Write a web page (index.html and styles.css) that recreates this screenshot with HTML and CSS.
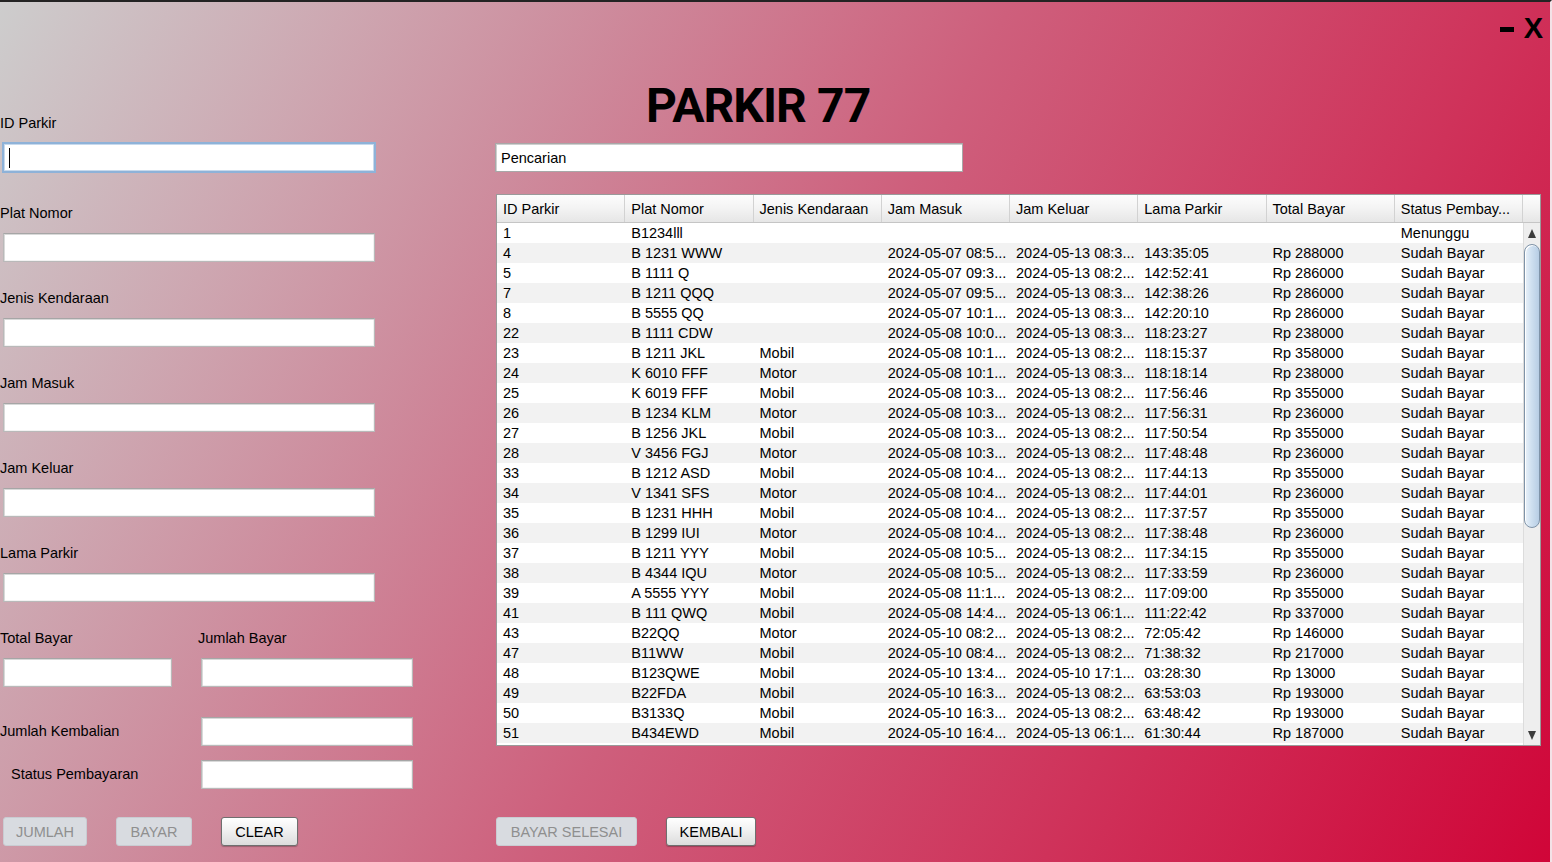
FILE: index.html
```html
<!DOCTYPE html>
<html lang="id">
<head>
<meta charset="utf-8">
<title>PARKIR 77</title>
<link rel="stylesheet" href="styles.css">
</head>
<body>
<div class="window">
  <div class="controls"><span class="dash"></span><span class="close">X</span></div>

  <div class="left">
    <div class="group group-first">
      <div class="label">ID Parkir</div>
      <div class="field field-focus"><span class="caret"></span></div>
    </div>
    <div class="group">
      <div class="label">Plat Nomor</div>
      <div class="field"></div>
    </div>
    <div class="group">
      <div class="label">Jenis Kendaraan</div>
      <div class="field"></div>
    </div>
    <div class="group">
      <div class="label">Jam Masuk</div>
      <div class="field"></div>
    </div>
    <div class="group">
      <div class="label">Jam Keluar</div>
      <div class="field"></div>
    </div>
    <div class="group">
      <div class="label">Lama Parkir</div>
      <div class="field"></div>
    </div>

    <div class="pay-row pay-labels">
      <div class="label pay-col">Total Bayar</div>
      <div class="label">Jumlah Bayar</div>
    </div>
    <div class="pay-row pay-inputs">
      <div class="pay-col"><div class="field field-total"></div></div>
      <div class="field field-side"></div>
    </div>
    <div class="pay-row pay-kembali">
      <div class="label pay-col">Jumlah Kembalian</div>
      <div class="field field-side"></div>
    </div>
    <div class="pay-row pay-status">
      <div class="label pay-col label-status">Status Pembayaran</div>
      <div class="field field-side"></div>
    </div>

    <div class="buttons buttons-left">
      <button class="btn btn-disabled btn-jumlah">JUMLAH</button>
      <button class="btn btn-disabled btn-bayar">BAYAR</button>
      <button class="btn btn-clear">CLEAR</button>
    </div>
  </div>

  <div class="right">
    <div class="title">PARKIR 77</div>
    <div class="field search">Pencarian</div>

    <div class="table">
      <div class="thead">
        <div class="th">ID Parkir</div>
        <div class="th">Plat Nomor</div>
        <div class="th">Jenis Kendaraan</div>
        <div class="th">Jam Masuk</div>
        <div class="th">Jam Keluar</div>
        <div class="th">Lama Parkir</div>
        <div class="th">Total Bayar</div>
        <div class="th">Status Pembay...</div>
        <div class="th th-corner"></div>
      </div>
      <div class="tbody">
        <div class="rows">
          <div class="tr"><div>1</div><div>B1234lll</div><div></div><div></div><div></div><div></div><div></div><div>Menunggu</div></div>
          <div class="tr"><div>4</div><div>B 1231 WWW</div><div></div><div>2024-05-07 08:5...</div><div>2024-05-13 08:3...</div><div>143:35:05</div><div>Rp 288000</div><div>Sudah Bayar</div></div>
          <div class="tr"><div>5</div><div>B 1111 Q</div><div></div><div>2024-05-07 09:3...</div><div>2024-05-13 08:2...</div><div>142:52:41</div><div>Rp 286000</div><div>Sudah Bayar</div></div>
          <div class="tr"><div>7</div><div>B 1211 QQQ</div><div></div><div>2024-05-07 09:5...</div><div>2024-05-13 08:3...</div><div>142:38:26</div><div>Rp 286000</div><div>Sudah Bayar</div></div>
          <div class="tr"><div>8</div><div>B 5555 QQ</div><div></div><div>2024-05-07 10:1...</div><div>2024-05-13 08:3...</div><div>142:20:10</div><div>Rp 286000</div><div>Sudah Bayar</div></div>
          <div class="tr"><div>22</div><div>B 1111 CDW</div><div></div><div>2024-05-08 10:0...</div><div>2024-05-13 08:3...</div><div>118:23:27</div><div>Rp 238000</div><div>Sudah Bayar</div></div>
          <div class="tr"><div>23</div><div>B 1211 JKL</div><div>Mobil</div><div>2024-05-08 10:1...</div><div>2024-05-13 08:2...</div><div>118:15:37</div><div>Rp 358000</div><div>Sudah Bayar</div></div>
          <div class="tr"><div>24</div><div>K 6010 FFF</div><div>Motor</div><div>2024-05-08 10:1...</div><div>2024-05-13 08:3...</div><div>118:18:14</div><div>Rp 238000</div><div>Sudah Bayar</div></div>
          <div class="tr"><div>25</div><div>K 6019 FFF</div><div>Mobil</div><div>2024-05-08 10:3...</div><div>2024-05-13 08:2...</div><div>117:56:46</div><div>Rp 355000</div><div>Sudah Bayar</div></div>
          <div class="tr"><div>26</div><div>B 1234 KLM</div><div>Motor</div><div>2024-05-08 10:3...</div><div>2024-05-13 08:2...</div><div>117:56:31</div><div>Rp 236000</div><div>Sudah Bayar</div></div>
          <div class="tr"><div>27</div><div>B 1256 JKL</div><div>Mobil</div><div>2024-05-08 10:3...</div><div>2024-05-13 08:2...</div><div>117:50:54</div><div>Rp 355000</div><div>Sudah Bayar</div></div>
          <div class="tr"><div>28</div><div>V 3456 FGJ</div><div>Motor</div><div>2024-05-08 10:3...</div><div>2024-05-13 08:2...</div><div>117:48:48</div><div>Rp 236000</div><div>Sudah Bayar</div></div>
          <div class="tr"><div>33</div><div>B 1212 ASD</div><div>Mobil</div><div>2024-05-08 10:4...</div><div>2024-05-13 08:2...</div><div>117:44:13</div><div>Rp 355000</div><div>Sudah Bayar</div></div>
          <div class="tr"><div>34</div><div>V 1341 SFS</div><div>Motor</div><div>2024-05-08 10:4...</div><div>2024-05-13 08:2...</div><div>117:44:01</div><div>Rp 236000</div><div>Sudah Bayar</div></div>
          <div class="tr"><div>35</div><div>B 1231 HHH</div><div>Mobil</div><div>2024-05-08 10:4...</div><div>2024-05-13 08:2...</div><div>117:37:57</div><div>Rp 355000</div><div>Sudah Bayar</div></div>
          <div class="tr"><div>36</div><div>B 1299 IUI</div><div>Motor</div><div>2024-05-08 10:4...</div><div>2024-05-13 08:2...</div><div>117:38:48</div><div>Rp 236000</div><div>Sudah Bayar</div></div>
          <div class="tr"><div>37</div><div>B 1211 YYY</div><div>Mobil</div><div>2024-05-08 10:5...</div><div>2024-05-13 08:2...</div><div>117:34:15</div><div>Rp 355000</div><div>Sudah Bayar</div></div>
          <div class="tr"><div>38</div><div>B 4344 IQU</div><div>Motor</div><div>2024-05-08 10:5...</div><div>2024-05-13 08:2...</div><div>117:33:59</div><div>Rp 236000</div><div>Sudah Bayar</div></div>
          <div class="tr"><div>39</div><div>A 5555 YYY</div><div>Mobil</div><div>2024-05-08 11:1...</div><div>2024-05-13 08:2...</div><div>117:09:00</div><div>Rp 355000</div><div>Sudah Bayar</div></div>
          <div class="tr"><div>41</div><div>B 111 QWQ</div><div>Mobil</div><div>2024-05-08 14:4...</div><div>2024-05-13 06:1...</div><div>111:22:42</div><div>Rp 337000</div><div>Sudah Bayar</div></div>
          <div class="tr"><div>43</div><div>B22QQ</div><div>Motor</div><div>2024-05-10 08:2...</div><div>2024-05-13 08:2...</div><div>72:05:42</div><div>Rp 146000</div><div>Sudah Bayar</div></div>
          <div class="tr"><div>47</div><div>B11WW</div><div>Mobil</div><div>2024-05-10 08:4...</div><div>2024-05-13 08:2...</div><div>71:38:32</div><div>Rp 217000</div><div>Sudah Bayar</div></div>
          <div class="tr"><div>48</div><div>B123QWE</div><div>Mobil</div><div>2024-05-10 13:4...</div><div>2024-05-10 17:1...</div><div>03:28:30</div><div>Rp 13000</div><div>Sudah Bayar</div></div>
          <div class="tr"><div>49</div><div>B22FDA</div><div>Mobil</div><div>2024-05-10 16:3...</div><div>2024-05-13 08:2...</div><div>63:53:03</div><div>Rp 193000</div><div>Sudah Bayar</div></div>
          <div class="tr"><div>50</div><div>B3133Q</div><div>Mobil</div><div>2024-05-10 16:3...</div><div>2024-05-13 08:2...</div><div>63:48:42</div><div>Rp 193000</div><div>Sudah Bayar</div></div>
          <div class="tr"><div>51</div><div>B434EWD</div><div>Mobil</div><div>2024-05-10 16:4...</div><div>2024-05-13 06:1...</div><div>61:30:44</div><div>Rp 187000</div><div>Sudah Bayar</div></div>
        </div>
        <div class="scrollbar">
          <div class="sb-btn"><span class="arrow-up"></span></div>
          <div class="sb-track"><div class="sb-thumb"></div></div>
          <div class="sb-btn"><span class="arrow-down"></span></div>
        </div>
      </div>
    </div>

    <div class="buttons buttons-right">
      <button class="btn btn-disabled btn-selesai">BAYAR SELESAI</button>
      <button class="btn btn-kembali">KEMBALI</button>
    </div>
  </div>
</div>
</body>
</html>
```

FILE: styles.css
```css
* { box-sizing: border-box; }
html, body { margin: 0; padding: 0; }
body {
  width: 1552px;
  height: 862px;
  overflow: hidden;
  font-family: "Liberation Sans", Arial, sans-serif;
  font-size: 14.5px;
  color: #000;
}
.window {
  position: relative;
  width: 1552px;
  height: 862px;
  border-top: 2px solid #232323;
  border-right: 2px solid #f3e2e7;
  background: linear-gradient(119deg, #cdcdcd 0%, #ce5f7c 50%, #d00538 100%);
  display: flex;
  align-items: flex-start;
}

/* window controls */
.controls {
  position: absolute;
  top: 12px;
  right: 7px;
  display: flex;
  align-items: flex-start;
  gap: 10px;
}
.dash {
  display: block;
  width: 14px;
  height: 5px;
  margin-top: 13px;
  background: #000;
}
.close {
  font-weight: 700;
  font-size: 29px;
  line-height: 29px;
}

/* left form */
.left {
  width: 415px;
  padding-top: 113px;
  display: flex;
  flex-direction: column;
}
.label {
  height: 17px;
  line-height: 17px;
  white-space: nowrap;
}
.group {
  display: flex;
  flex-direction: column;
  margin-bottom: 28px;
}
.group .label { margin-bottom: 11px; }
.group-first { margin-bottom: 32px; }
.group-first .label { margin-bottom: 10px; }

.field {
  margin-left: 3px;
  width: 372px;
  height: 29px;
  background: #fff;
  border: 1px solid #b9b9b9;
  border-top-color: #a6a6a6;
  box-shadow: inset 1px 1px 0 #d9d9d9, inset -1px -1px 0 #f2f2f2;
}
.field-focus {
  height: 31px;
  margin-left: 2px;
  width: 374px;
  border: 2px solid #8eb2d8;
  box-shadow: inset 0 0 0 1px #c7d9ec;
  position: relative;
}
.caret {
  position: absolute;
  left: 5px;
  top: 4px;
  width: 1px;
  height: 20px;
  background: #000;
}

/* payment block */
.pay-row {
  display: flex;
  align-items: center;
}
.pay-col { width: 198px; flex: none; }
.pay-inputs { margin-top: 11px; }
.pay-kembali { margin-top: 30px; }
.pay-status { margin-top: 14px; }
.pay-col .field-total { width: 169px; }
.field-side { width: 212px; }
.label-status { padding-left: 11px; }

.buttons {
  display: flex;
  gap: 29px;
}
.buttons-left { margin-top: 28px; margin-left: 3px; }

.btn {
  height: 29px;
  padding: 0;
  font-family: "Liberation Sans", Arial, sans-serif;
  font-size: 14.5px;
  border-radius: 3px;
  color: #000;
  background: linear-gradient(#ffffff, #f1f1f1 45%, #dcdcdc);
  border: 1px solid #6f6f6f;
  box-shadow: 0 1px 1px rgba(0,0,0,0.25);
}
.btn-disabled {
  color: #8f8f8f;
  background: #d8dbe0;
  border: 1px solid #c9ccd2;
  box-shadow: none;
}
.btn-jumlah { width: 84px; }
.btn-bayar { width: 76px; }
.btn-clear { width: 77px; }
.btn-selesai { width: 141px; }
.btn-kembali { width: 90px; }

/* right panel */
.right {
  margin-left: 80px;
  width: 1046px;
  padding-top: 76px;
  display: flex;
  flex-direction: column;
}
.title {
  font-family: Roboto, "Liberation Sans", sans-serif;
  font-weight: 700;
  font-size: 48px;
  line-height: 56px;
  height: 56px;
  letter-spacing: -0.9px;
  padding-left: 151px;
}
.search {
  margin-left: 0;
  margin-top: 9px;
  width: 468px;
  padding-left: 5px;
  line-height: 29px;
  border: 1px solid #a8a8a8;
  box-shadow: inset 1px 1px 0 #cfcfcf;
}

.table {
  margin-top: 22px;
  margin-left: 1px;
  width: 1045px;
  height: 552px;
  border: 1px solid #9a9a9a;
  background: #fff;
  display: flex;
  flex-direction: column;
}
.thead {
  display: grid;
  grid-template-columns: repeat(8, 1fr) 17px;
  height: 28px;
  border-bottom: 1px solid #c5c5c5;
  background: linear-gradient(#fdfdfd, #f3f3f3 50%, #e6e6e6);
}
.th {
  line-height: 28px;
  padding-left: 6px;
  border-right: 1px solid #d2d2d2;
  white-space: nowrap;
  overflow: hidden;
}
.th-corner { border-right: none; }

.tbody {
  flex: 1;
  display: grid;
  grid-template-columns: 1fr 17px;
  overflow: hidden;
}
.rows { display: flex; flex-direction: column; }
.tr {
  display: grid;
  grid-template-columns: repeat(8, 1fr);
  height: 20px;
  line-height: 21px;
}
.tr:nth-child(even) { background: #f2f2f2; }
.tr > div {
  padding-left: 6px;
  white-space: nowrap;
  overflow: hidden;
}

.scrollbar {
  display: flex;
  flex-direction: column;
  background: #eeeeee;
  border-left: 1px solid #dcdcdc;
}
.sb-btn {
  height: 20px;
  display: flex;
  align-items: center;
  justify-content: center;
}
.arrow-up, .arrow-down {
  width: 0;
  height: 0;
  border-left: 4.5px solid transparent;
  border-right: 4.5px solid transparent;
}
.arrow-up { border-bottom: 9px solid #3c3c3c; }
.arrow-down { border-top: 9px solid #3c3c3c; }
.sb-track {
  flex: 1;
  padding-top: 1px;
}
.sb-thumb {
  height: 284px;
  margin-left: 0;
  width: 16px;
  border: 1px solid #7f93a8;
  border-radius: 8px;
  background: linear-gradient(to right, #e9f1f9, #cfe0f0 45%, #b7cde4);
  box-shadow: inset 1px 1px 0 #ffffff;
}

.buttons-right {
  margin-top: 71px;
  margin-left: 1px;
}
```
